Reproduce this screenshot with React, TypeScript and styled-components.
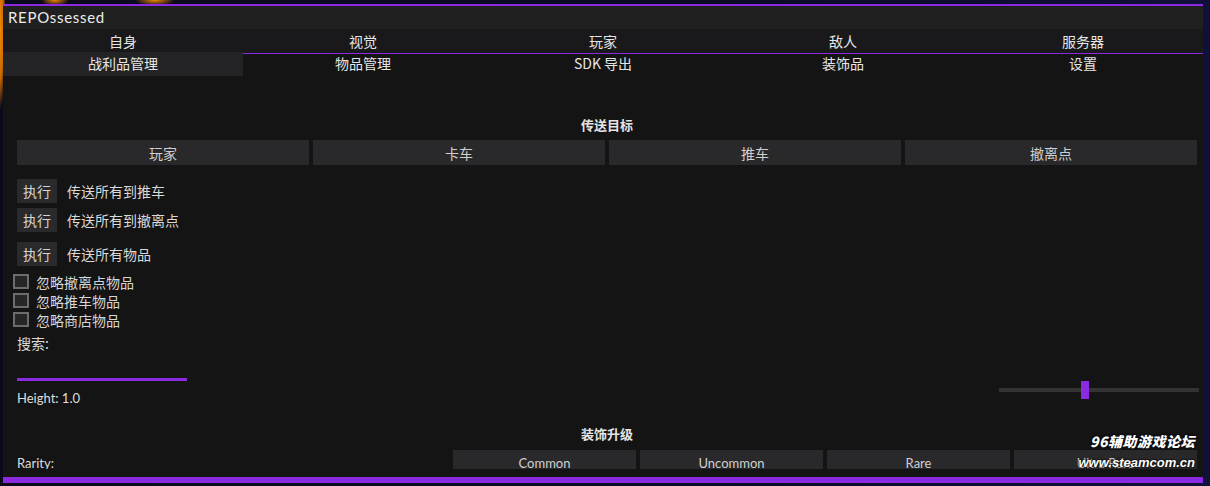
import React from "react";
import styled, { createGlobalStyle } from "styled-components";

const PURPLE = "#8a2be2";

const Global = createGlobalStyle`
  html, body { margin: 0; padding: 0; }
  body {
    width: 1210px;
    height: 486px;
    overflow: hidden;
    background:
      radial-gradient(ellipse 6px 80px at 0px 30px, #f28a00 0, #c86a00 60%, rgba(0,0,0,0) 100%),
      radial-gradient(ellipse 14px 6px at 55px 0px, #f08a00 0, rgba(0,0,0,0) 100%),
      radial-gradient(ellipse 20px 6px at 155px 0px, #f08a00 0, rgba(0,0,0,0) 100%),
      linear-gradient(90deg, #0b0a1c 0%, #0c0b26 60%, #10103a 100%);
    font-family: "Noto Sans", "Noto Sans CJK SC", sans-serif;
    color: #dcdcdc;
  }
`;

const Window = styled.div`
  position: relative;
  margin: 4px 0 0 3px;
  width: 1200px;
  height: 479px;
  display: flex;
  flex-direction: column;
  background: #141414;
  border-top: 2px solid ${PURPLE};
  box-sizing: border-box;
`;

const TitleBar = styled.div`
  height: 23px;
  background: #202020;
  display: flex;
  align-items: center;
  padding: 0 0 2px 5px;
  box-sizing: border-box;
  font-family: "Lato", "Noto Sans", sans-serif;
  font-size: 15px;
  color: #ececec;
  letter-spacing: 0.7px;
`;

const TabRow = styled.div<{ $top?: boolean }>`
  display: grid;
  grid-template-columns: repeat(5, 1fr);
  height: ${(p) => (p.$top ? 24 : 23)}px;
  background: ${(p) => (p.$top ? "#19191b" : "#141414")};
`;

const Tab = styled.div<{ $active?: boolean; $lined?: boolean }>`
  display: flex;
  align-items: center;
  justify-content: center;
  font-family: "Noto Sans CJK SC", "Noto Sans", sans-serif;
  font-size: 14px;
  color: #e6e6e6;
  box-sizing: border-box;
  background: ${(p) => (p.$active ? "#232325" : "transparent")};
  border-top: ${(p) => (p.$lined ? `1px solid ${p.$active ? "#232325" : PURPLE}` : "none")};
  margin-top: ${(p) => (p.$lined && p.$active ? "-1px" : "0")};
  line-height: 1;
  padding-bottom: ${(p) => (p.$lined ? 4 : 1)}px;
`;

const Content = styled.div`
  flex: 1;
  overflow: hidden;
  padding: 40px 6px 0 10px;
  display: flex;
  flex-direction: column;
  font-family: "Noto Sans CJK SC", "Noto Sans", sans-serif;
  font-size: 14px;
`;

const Footer = styled.div`
  height: 6px;
  margin-top: 8px;
  background: ${PURPLE};
`;

const Heading = styled.div<{ $mt?: number }>`
  text-align: center;
  font-weight: 700;
  font-size: 13px;
  color: #e4e4e4;
  height: 18px;
  line-height: 18px;
  padding-left: 4px;
  margin-top: ${(p) => p.$mt ?? 0}px;
`;

const ButtonGrid = styled.div`
  display: grid;
  grid-template-columns: repeat(4, 1fr);
  gap: 4px;
  margin: 6px 0 0 4px;
`;

const Btn = styled.div`
  height: 25px;
  background: #29292b;
  color: #cfcfcf;
  display: flex;
  align-items: center;
  justify-content: center;
  font-size: 14px;
  line-height: 1;
`;

const ActionRow = styled.div<{ $mt: number }>`
  display: flex;
  align-items: center;
  gap: 10px;
  margin: ${(p) => p.$mt}px 0 0 4px;
  height: 24px;
`;

const ExecBtn = styled.div`
  width: 40px;
  height: 24px;
  background: #2a2a2c;
  color: #d4d4d4;
  display: flex;
  align-items: center;
  justify-content: center;
  font-size: 14px;
`;

const Label = styled.span`
  color: #dadada;
  font-size: 14px;
`;

const CheckList = styled.div`
  display: flex;
  flex-direction: column;
  margin-top: 6px;
`;

const CheckRow = styled.label`
  display: flex;
  align-items: center;
  gap: 7px;
  height: 19px;
  font-size: 14px;
  color: #d6d6d6;
`;

const Box = styled.span`
  width: 16px;
  height: 15px;
  box-sizing: border-box;
  border: 2px solid #6c6c6c;
  background: #262626;
`;

const Search = styled.div`
  margin: 4px 0 0 4px;
  font-size: 14px;
  color: #dadada;
  height: 20px;
  line-height: 20px;
`;

const SliderRow = styled.div`
  display: flex;
  justify-content: space-between;
  align-items: flex-start;
  margin-top: 25px;
`;

const LeftCol = styled.div`
  display: flex;
  flex-direction: column;
  margin-left: 4px;
`;

const Underline = styled.div`
  width: 170px;
  height: 3px;
  background: ${PURPLE};
`;

const SmallText = styled.div`
  font-family: "Lato", "Noto Sans", sans-serif;
  font-size: 13px;
  color: #dedede;
  margin-top: 9px;
  line-height: 16px;
`;

const Track = styled.div`
  position: relative;
  width: 200px;
  height: 4px;
  background: #333333;
  margin: 10px -2px 0 0;
`;

const Thumb = styled.div`
  position: absolute;
  top: -7px;
  width: 8px;
  height: 18px;
  background: ${PURPLE};
`;

const Rarity = styled.div`
  display: flex;
  align-items: flex-start;
  margin: 7px 0 0 4px;
  gap: 4px;
`;

const RarityLabel = styled.div`
  flex: 1;
  font-family: "Lato", "Noto Sans", sans-serif;
  font-size: 13px;
  color: #dcdcdc;
  line-height: 26px;
`;

const RarityBtn = styled(Btn)`
  width: 183px;
  font-family: "Lato", "Noto Sans", sans-serif;
  font-size: 13px;
  padding-top: 2px;
  box-sizing: border-box;
`;

const Watermark = styled.div`
  position: absolute;
  right: 8px;
  bottom: 11px;
  display: flex;
  flex-direction: column;
  align-items: flex-end;
  font-style: italic;
  font-weight: 900;
  color: #ffffff;
  text-shadow: 0 0 2px #000, 0 0 2px #000;
  pointer-events: none;
`;

const WmTop = styled.div`
  font-family: "Noto Sans CJK SC", sans-serif;
  font-size: 14px;
  letter-spacing: 0.5px;
  line-height: 20px;
`;

const WmBottom = styled.div`
  font-family: "Liberation Sans", sans-serif;
  font-size: 13px;
  line-height: 18px;
  margin-top: 3px;
`;

const row1 = ["自身", "视觉", "玩家", "敌人", "服务器"];
const row2 = ["战利品管理", "物品管理", "SDK 导出", "装饰品", "设置"];
const targets = ["玩家", "卡车", "推车", "撤离点"];
const actions: [string, number][] = [
  ["传送所有到推车", 14],
  ["传送所有到撤离点", 5],
  ["传送所有物品", 10],
];
const checks = ["忽略撤离点物品", "忽略推车物品", "忽略商店物品"];
const rarities = ["Common", "Uncommon", "Rare", "Ultra Rare"];

export default function App() {
  return (
    <>
      <Global />
      <Window>
        <TitleBar>REPOssessed</TitleBar>
        <TabRow $top>
          {row1.map((t) => (
            <Tab key={t}>{t}</Tab>
          ))}
        </TabRow>
        <TabRow>
          {row2.map((t, i) => (
            <Tab key={t} $lined $active={i === 0}>
              {t}
            </Tab>
          ))}
        </TabRow>
        <Content>
          <Heading>传送目标</Heading>
          <ButtonGrid>
            {targets.map((t) => (
              <Btn key={t}>{t}</Btn>
            ))}
          </ButtonGrid>
          {actions.map(([t, mt]) => (
            <ActionRow key={t} $mt={mt}>
              <ExecBtn>执行</ExecBtn>
              <Label>{t}</Label>
            </ActionRow>
          ))}
          <CheckList>
            {checks.map((c) => (
              <CheckRow key={c}>
                <Box />
                {c}
              </CheckRow>
            ))}
          </CheckList>
          <Search>搜索:</Search>
          <SliderRow>
            <LeftCol>
              <Underline />
              <SmallText>Height: 1.0</SmallText>
            </LeftCol>
            <Track>
              <Thumb style={{ left: "82px" }} />
            </Track>
          </SliderRow>
          <Heading $mt={19}>装饰升级</Heading>
          <Rarity>
            <RarityLabel>Rarity:</RarityLabel>
            {rarities.map((r) => (
              <RarityBtn key={r}>{r}</RarityBtn>
            ))}
          </Rarity>
        </Content>
        <Footer />
        <Watermark>
          <WmTop>96辅助游戏论坛</WmTop>
          <WmBottom>www.steamcom.cn</WmBottom>
        </Watermark>
      </Window>
    </>
  );
}
